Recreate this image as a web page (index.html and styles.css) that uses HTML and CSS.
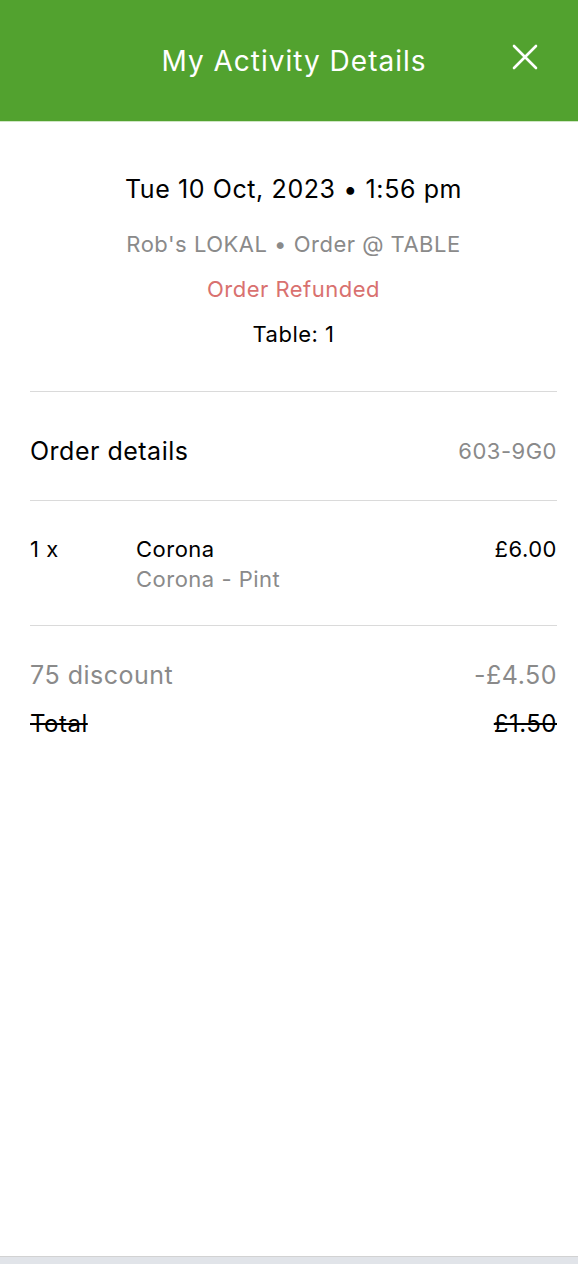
FILE: index.html
```html
<!DOCTYPE html>
<html lang="en">
<head>
<meta charset="utf-8">
<title>My Activity Details</title>
<link rel="stylesheet" href="styles.css">
</head>
<body>
<div class="screen">
  <header class="topbar">
    <h1 class="topbar-title">My Activity Details</h1>
    <button class="close-btn" aria-label="Close">
      <svg width="26" height="26" viewBox="0 0 26 26"><path d="M2 2 L24 24 M24 2 L2 24" stroke="#fff" stroke-width="2.6" stroke-linecap="round" fill="none"/></svg>
    </button>
  </header>

  <main class="content">
    <section class="summary">
      <div class="summary-date">Tue 10 Oct, 2023 • 1:56 pm</div>
      <div class="summary-venue">Rob's LOKAL • Order @ TABLE</div>
      <div class="summary-status">Order Refunded</div>
      <div class="summary-table">Table: 1</div>
    </section>

    <div class="row row-head">
      <span class="label">Order details</span>
      <span class="ref">603-9G0</span>
    </div>

    <div class="row row-item">
      <span class="qty">1 x</span>
      <div class="item-info">
        <div class="item-name">Corona</div>
        <div class="item-variant">Corona - Pint</div>
      </div>
      <span class="item-price">£6.00</span>
    </div>

    <div class="totals">
      <div class="total-line discount">
        <span>75 discount</span>
        <span>-£4.50</span>
      </div>
      <div class="total-line grand">
        <span>Total</span>
        <span>£1.50</span>
      </div>
    </div>
  </main>

  <footer class="bottom-strip"></footer>
</div>
</body>
</html>
```

FILE: styles.css
```css
* { box-sizing: border-box; }

html, body {
  margin: 0;
  padding: 0;
  background: #ffffff;
}

body {
  font-family: Inter, "Liberation Sans", Arial, sans-serif;
  color: #000;
  letter-spacing: 0.5px;
}

.screen {
  display: flex;
  flex-direction: column;
  height: 1264px;
}

.topbar {
  position: relative;
  height: 122px;
  flex: 0 0 auto;
  background: #52a22f;
  border-bottom: 1px solid #cfe6c4;
  display: flex;
  align-items: center;
  justify-content: center;
}

.topbar-title {
  margin: 0 0 0 10px;
  font-size: 28px;
  font-weight: 400;
  color: #fff;
  letter-spacing: 1px;
}

.close-btn {
  position: absolute;
  right: 40px;
  top: 44px;
  width: 26px;
  height: 26px;
  padding: 0;
  border: 0;
  background: transparent;
  display: flex;
}

.content {
  flex: 1 1 auto;
  padding: 0 21px 0 30px;
}

.summary {
  padding: 45px 0 34px;
  text-align: center;
  border-bottom: 1px solid #dadada;
}

.summary-date {
  font-size: 25px;
  line-height: 45px;
  margin-bottom: 10px;
  letter-spacing: 0.6px;
}

.summary-venue,
.summary-status,
.summary-table {
  font-size: 22px;
  line-height: 45px;
}

.summary-venue { color: #8a8a8a; }
.summary-status { color: #d9716f; }
.summary-table { color: #000; }

.row {
  display: flex;
  border-bottom: 1px solid #dadada;
}

.row-head {
  justify-content: space-between;
  align-items: center;
  padding: 39px 0 29px;
  line-height: 40px;
}

.label { font-size: 25px; }
.ref { font-size: 22px; color: #8a8a8a; }

.row-item {
  padding: 33px 0 31px;
  align-items: flex-start;
}

.qty {
  width: 106px;
  font-size: 22px;
  line-height: 30px;
}

.item-info { flex: 1 1 auto; }

.item-name {
  font-size: 22px;
  line-height: 30px;
}

.item-variant {
  font-size: 22px;
  line-height: 30px;
  color: #8a8a8a;
}

.item-price {
  font-size: 22px;
  line-height: 30px;
}

.totals {
  padding-top: 32px;
}

.total-line {
  display: flex;
  justify-content: space-between;
  line-height: 34px;
}

.discount {
  font-size: 25px;
  color: #8a8a8a;
  margin-bottom: 15px;
}

.grand {
  font-size: 24px;
  text-decoration: line-through;
}

.bottom-strip {
  flex: 0 0 8px;
  background: #e1e4e9;
  border-top: 1px solid #d2d2d2;
}
```
